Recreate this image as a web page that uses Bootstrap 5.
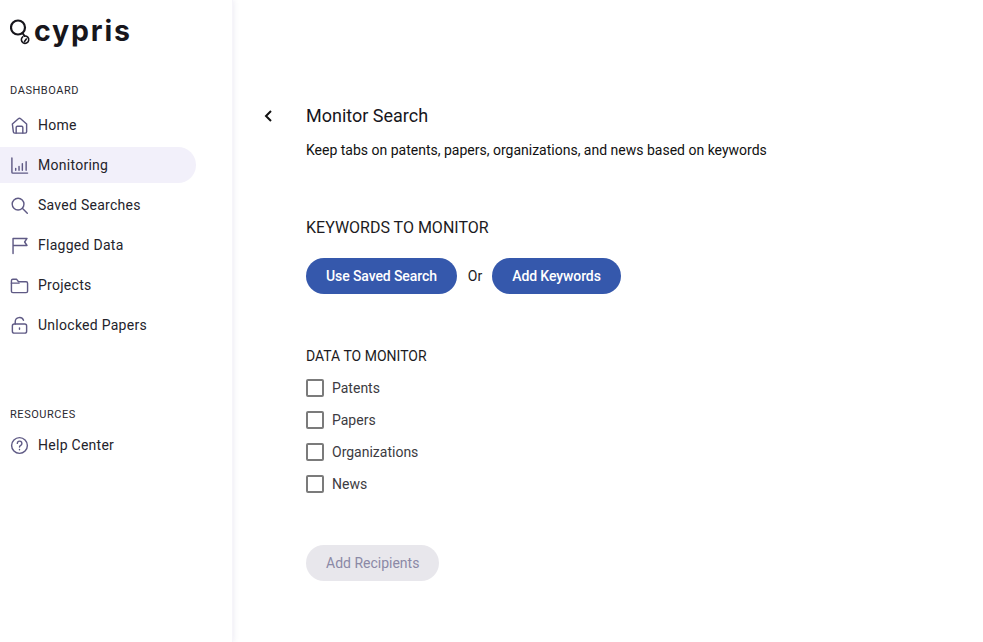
<!DOCTYPE html>
<html lang="en">
<head>
<meta charset="utf-8">
<title>Monitor Search</title>
<link href="https://cdn.jsdelivr.net/npm/bootstrap@5.3.0/dist/css/bootstrap.min.css" rel="stylesheet">
<style>
html,body{height:100%;}
body{font-family:Roboto,"Liberation Sans",sans-serif;background:#fff;color:#1c1b22;overflow:hidden;}
.shell{height:642px;}
.side{width:233px;flex:none;background:#fff;box-shadow:1px 0 5px rgba(90,80,150,.10);border-right:1px solid #f6f5fa;padding-top:13px;}
.brand{height:36px;padding-left:10px;gap:1px;margin-bottom:35px;}
.brand-word{font-family:Inter,"Liberation Sans",sans-serif;font-weight:700;font-size:28.5px;line-height:36px;color:#17161c;letter-spacing:1.8px;}
.sec-label{font-size:11px;letter-spacing:.55px;line-height:13px;color:#2a2930;padding-left:10px;margin-bottom:10px;}
.side-link{height:36px;width:196px;margin-bottom:4px;padding-left:10px;gap:9px;font-size:14px;letter-spacing:.27px;color:#24232b;text-decoration:none;border-radius:0 18px 18px 0;}
.side-link.is-on{background:#f2f0fa;}
.side-link svg{width:19px;height:19px;flex:none;fill:none;stroke:#5f5a85;stroke-width:1.5;stroke-linecap:round;stroke-linejoin:round;}
.sec-label.res-label{margin-top:65px;margin-bottom:6px;}
.content{padding:97px 0 0 29px;}
.back{width:44px;flex:none;height:38px;}
.back svg{width:12px;height:14px;fill:none;stroke:#111;stroke-width:2;margin-top:12px;}
.page-title{font-size:18px;line-height:38px;font-weight:400;color:#17161c;margin:0;}
.page-desc{font-size:14px;line-height:20px;color:#111;margin:5px 0 0;}
.kw-title{font-size:16px;line-height:20px;font-weight:400;color:#1c1b22;margin:58px 0 20px;}
.pill{height:36px;border-radius:18px;border:0;padding:0 20px;font-size:14px;font-weight:500;line-height:36px;letter-spacing:-.1px;}
.pill-blue,.pill-blue:hover{background:#3558ac;color:#fff;}
.or-text{font-size:14px;color:#1c1b22;margin:0 10px 0 11px;}
.data-title{font-size:14px;line-height:18px;font-weight:400;color:#1c1b22;margin:53px 0 7px;}
.chk-row{height:32px;gap:8px;margin:0;padding:0;min-height:0;}
.chk-row .form-check-input{width:18px;height:18px;margin:0;float:none;border:2px solid #7b7b7b;border-radius:2px;}
.chk-row .form-check-label{font-size:14px;letter-spacing:0;color:#3c3b42;}
.btn.pill-off:disabled{background:#e8e7ec;color:#8b89a6;margin-top:45px;font-weight:400;letter-spacing:0;display:block;opacity:1;}
</style>
</head>
<body>
<div class="d-flex shell">
  <nav class="side">
    <div class="brand d-flex align-items-center">
      <svg width="23" height="27" viewBox="0 0 23 27" fill="none" stroke="#17161c" stroke-linecap="round">
        <circle cx="8" cy="9.500" r="7" stroke-width="2.200"/>
        <path d="M12.500 15 L14.500 18" stroke-width="2"/>
        <path d="M14.500 18 a3.700 3.700 0 1 1 -1.800 .8 M16.300 21 l-1.800 2.500" stroke-width="1.600"/>
      </svg>
      <span class="brand-word">cypris</span>
    </div>
    <div class="sec-label">DASHBOARD</div>
    <a class="side-link d-flex align-items-center" href="#">
      <svg viewBox="0 0 20 20"><path d="M2.500 8.500 8.800 2.800a1.800 1.800 0 0 1 2.400 0l6.300 5.700V16.500a1.500 1.500 0 0 1-1.500 1.500h-11a1.500 1.500 0 0 1-1.500-1.500z"/><path d="M6.500 18v-6a1.200 1.200 0 0 1 1.200-1.200h4.600a1.200 1.200 0 0 1 1.200 1.200v6"/></svg>Home</a>
    <a class="side-link is-on d-flex align-items-center" href="#">
      <svg viewBox="0 0 20 20"><path d="M2 2v15a1 1 0 0 0 1 1h15.500"/><path d="M6 15v-2M9.500 15v-4M13 15V8M17 15V6"/></svg>Monitoring</a>
    <a class="side-link d-flex align-items-center" href="#">
      <svg viewBox="0 0 20 20"><circle cx="8.500" cy="8.500" r="6.200"/><path d="m13.200 13.200 5 5"/></svg>Saved Searches</a>
    <a class="side-link d-flex align-items-center" href="#">
      <svg viewBox="0 0 20 20"><path d="M3.200 18.400V2.600h14.700l-2.500 3.700 2.500 3.700H3.200"/></svg>Flagged Data</a>
    <a class="side-link d-flex align-items-center" href="#">
      <svg viewBox="0 0 20 20"><path d="M1.500 5a1.500 1.500 0 0 1 1.500-1.500h4l2 2.500h8a1.500 1.500 0 0 1 1.500 1.500V16a1.500 1.500 0 0 1-1.500 1.500H3A1.500 1.500 0 0 1 1.500 16z"/><path d="M1.500 7.500h8"/></svg>Projects</a>
    <a class="side-link d-flex align-items-center" href="#">
      <svg viewBox="0 0 20 20"><rect x="2.500" y="8.500" width="15" height="9.500" rx="2"/><path d="M5.500 8.500V6a4.500 4.500 0 0 1 8.700-1.500"/><path d="M10 12.500v1.500"/></svg>Unlocked Papers</a>
    <div class="sec-label res-label">RESOURCES</div>
    <a class="side-link d-flex align-items-center" href="#">
      <svg viewBox="0 0 20 20"><circle cx="10" cy="10" r="8.300"/><path d="M7.700 7.800a2.400 2.400 0 1 1 3.600 2.100c-.8.500-1.300 1-1.300 1.800"/><path d="M10 14.300v.2"/></svg>Help Center</a>
  </nav>
  <main class="content d-flex flex-grow-1">
    <div class="back"><svg viewBox="0 0 12 14"><path d="M9 2 4 7l5 5"/></svg></div>
    <div>
      <h1 class="page-title">Monitor Search</h1>
      <p class="page-desc">Keep tabs on patents, papers, organizations, and news based on keywords</p>
      <h2 class="kw-title">KEYWORDS TO MONITOR</h2>
      <div class="d-flex align-items-center">
        <button type="button" class="btn pill pill-blue">Use Saved Search</button>
        <span class="or-text">Or</span>
        <button type="button" class="btn pill pill-blue">Add Keywords</button>
      </div>
      <h3 class="data-title">DATA TO MONITOR</h3>
      <div class="form-check d-flex align-items-center chk-row"><input class="form-check-input" type="checkbox" id="c1"><label class="form-check-label" for="c1">Patents</label></div>
      <div class="form-check d-flex align-items-center chk-row"><input class="form-check-input" type="checkbox" id="c2"><label class="form-check-label" for="c2">Papers</label></div>
      <div class="form-check d-flex align-items-center chk-row"><input class="form-check-input" type="checkbox" id="c3"><label class="form-check-label" for="c3">Organizations</label></div>
      <div class="form-check d-flex align-items-center chk-row"><input class="form-check-input" type="checkbox" id="c4"><label class="form-check-label" for="c4">News</label></div>
      <button type="button" class="btn pill pill-off" disabled>Add Recipients</button>
    </div>
  </main>
</div>
<script src="https://cdn.jsdelivr.net/npm/bootstrap@5.3.0/dist/js/bootstrap.bundle.min.js"></script>
</body>
</html>
